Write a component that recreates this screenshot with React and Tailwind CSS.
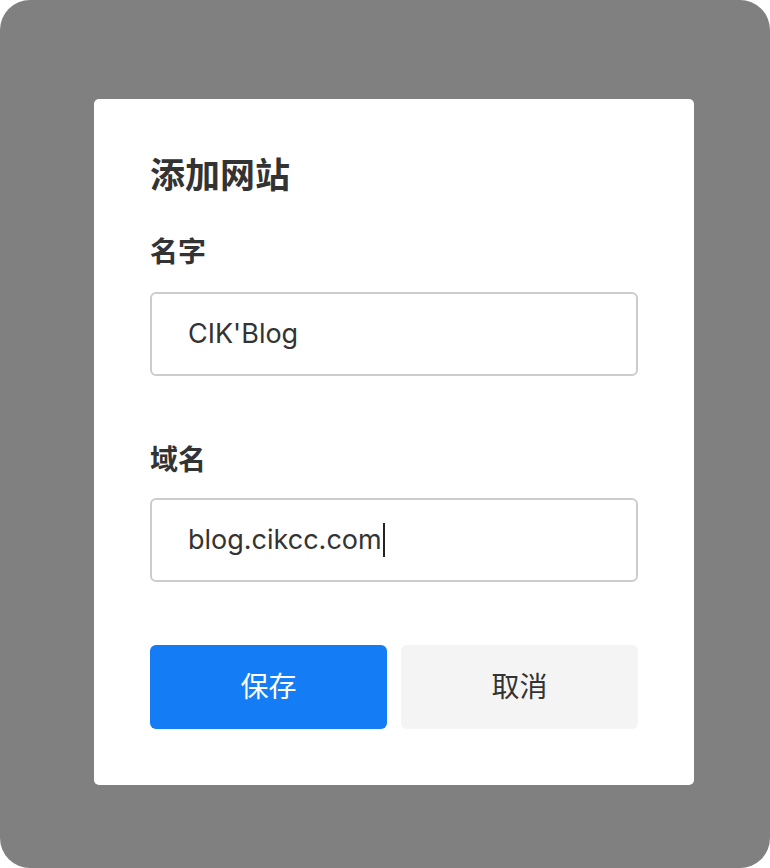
import React from 'react';

const font = { fontFamily: 'Inter, "Noto Sans CJK SC", sans-serif' };

const Field = ({ label, value, caret = false, className = '' }) => (
  <div className={className}>
    <div className="text-[28px] leading-[38px] font-semibold text-[#333333]">{label}</div>
    <div className="mt-[21px] h-[84px] rounded-md border-2 border-[#cccccc] pl-[36px] pr-[36px] flex items-center">
      <span className="text-[27px] text-[#333333]">{value}</span>
      {caret && <span className="ml-[1px] w-[2px] h-[34px] bg-[#222222]" />}
    </div>
  </div>
);

export default function App() {
  return (
    <div style={font} className="w-[770px] h-[868px] bg-white">
      <div className="w-full h-full bg-[#808080] rounded-[30px] pl-[94px] pt-[99px]">
        <div className="w-[600px] bg-white rounded-[5px] px-[56px] pt-[52px] pb-[56px]">
          <h1 className="text-[35px] leading-[49px] font-bold text-[#333333]">添加网站</h1>

          <Field label="名字" value="CIK'Blog" className="mt-[33px]" />
          <Field label="域名" value="blog.cikcc.com" caret className="mt-[65px] [&>div:last-child]:mt-[19px]" />

          <div className="mt-[63px] flex gap-[14px]">
            <button className="flex-1 h-[84px] rounded-md bg-[#147cf5] text-white text-[28px]">
              保存
            </button>
            <button className="flex-1 h-[84px] rounded-md bg-[#f4f4f4] text-[#333333] text-[28px]">
              取消
            </button>
          </div>
        </div>
      </div>
    </div>
  );
}
